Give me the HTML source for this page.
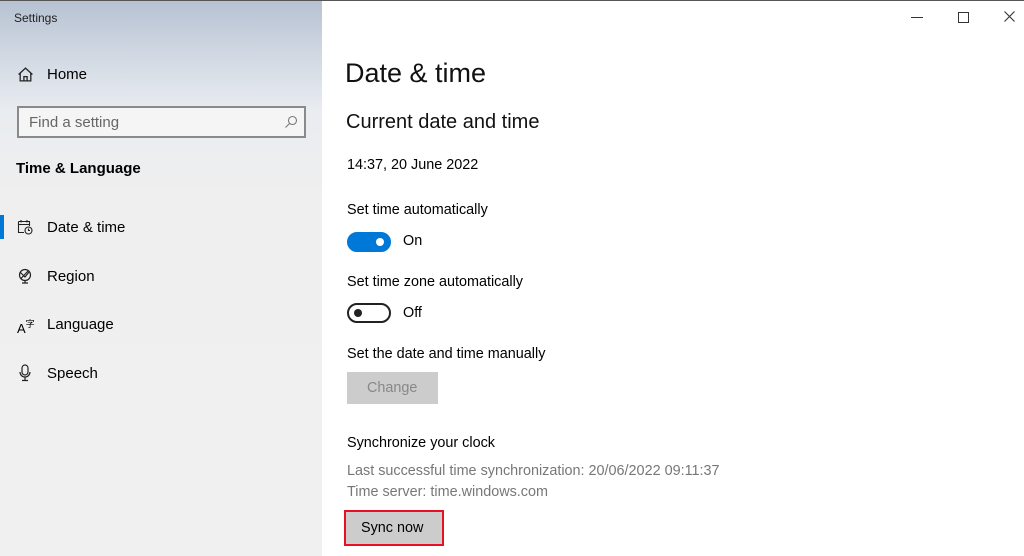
<!DOCTYPE html>
<html><head><style>
body{margin:0;width:1024px;height:556px;overflow:hidden;font-family:"Liberation Sans",sans-serif;background:#fff;position:relative}
.side{position:absolute;left:0;top:0;width:322px;height:556px;background:linear-gradient(180deg,#b6c2d2 0px,#d3dae4 60px,#e9ecf0 110px,#efefef 200px,#f0f0f0 556px)}
.topline{position:absolute;left:0;top:0;width:1024px;height:1px;background:#555}
.t{position:absolute;white-space:nowrap;color:#000}
.m{font-size:14.4px}
.search{position:absolute;left:17px;top:106px;width:285px;height:28px;border:2px solid #8a8a8a;background:#f5f5f5}
.tog{position:absolute;width:40px;height:16px;border-radius:10px;left:347px}
.btn{position:absolute;background:#ccc}
</style></head><body>
<div class="side"></div>
<div class="topline"></div>
<div class="t" style="left:14px;top:11px;font-size:12px;color:#222">Settings</div>
<svg style="position:absolute;left:17px;top:66px" width="17" height="17" viewBox="0 0 16 16" fill="none" stroke="#222" stroke-width="1.2"><path d="M1.5 8L8 2L14.5 8M3 6.5V14H13V6.5M6.5 14V10H9.5V14"/></svg>
<div class="t" style="left:47px;top:66px;font-size:15px">Home</div>
<div class="search"></div>
<div class="t" style="left:29px;top:114px;font-size:15px;color:#666">Find a setting</div>
<svg style="position:absolute;left:284px;top:115px" width="14" height="14" viewBox="0 0 14 14" fill="none" stroke="#777" stroke-width="1.1"><circle cx="8.5" cy="5.5" r="4"/><path d="M5.5 8.5L1.5 12.5"/></svg>
<div class="t" style="left:16px;top:160px;font-size:15px;font-weight:bold">Time &amp; Language</div>
<div style="position:absolute;left:0;top:215px;width:4px;height:24px;background:#0078d7"></div>
<svg style="position:absolute;left:17px;top:219px" width="16" height="16" viewBox="0 0 16 16" fill="none" stroke="#222" stroke-width="1.1"><path d="M1.5 2.5H12.5V7M1.5 2.5V13.5H7M1.5 5.5H12.5M4 1V3.5M10 1V3.5"/><circle cx="11.5" cy="11.5" r="3.5"/><path d="M11.5 9.5V11.5H13"/></svg>
<div class="t" style="left:47px;top:219px;font-size:15px">Date &amp; time</div>
<svg style="position:absolute;left:17px;top:268px" width="16" height="16" viewBox="0 0 16 16" fill="none" stroke="#222" stroke-width="1.2"><circle cx="8" cy="7" r="5.5"/><path d="M3 4L8 9L12 4M4 10.5L11 3M8 12.5V15M5 15H11"/></svg>
<div class="t" style="left:47px;top:268px;font-size:15px">Region</div>
<div class="t" style="left:17px;top:317px;font-size:13px">A<span style="font-size:9px;vertical-align:6px">字</span></div>
<div class="t" style="left:47px;top:316px;font-size:15px">Language</div>
<svg style="position:absolute;left:18px;top:364px" width="14" height="18" viewBox="0 0 14 18" fill="none" stroke="#222" stroke-width="1.2"><rect x="4" y="1" width="6" height="10" rx="3"/><path d="M2 8A5 5 0 0 0 12 8M7 13V16M4 16.5H10"/></svg>
<div class="t" style="left:47px;top:365px;font-size:15px">Speech</div>

<div style="position:absolute;left:911px;top:17px;width:12px;height:1px;background:#333"></div>
<div style="position:absolute;left:958px;top:12px;width:9px;height:9px;border:1px solid #333"></div>
<svg style="position:absolute;left:1004px;top:11px" width="11" height="11" viewBox="0 0 11 11" stroke="#333" stroke-width="1.1"><path d="M0.5 0.5L10.5 10.5M10.5 0.5L0.5 10.5"/></svg>

<div class="t" style="left:345px;top:58px;font-size:27px;color:#111">Date &amp; time</div>
<div class="t" style="left:346px;top:111px;font-size:20px;color:#111">Current date and time</div>
<div class="t m" style="left:347px;top:157px">14:37, 20 June 2022</div>
<div class="t m" style="left:347px;top:202px">Set time automatically</div>
<div class="tog" style="top:232px;background:#0078d7;border:2px solid #0078d7;width:40px"><div style="position:absolute;right:5px;top:4px;width:8px;height:8px;border-radius:50%;background:#fff"></div></div>
<div class="t m" style="left:403px;top:233px">On</div>
<div class="t m" style="left:347px;top:274px">Set time zone automatically</div>
<div class="tog" style="top:303px;border:2px solid #222;width:40px"><div style="position:absolute;left:5px;top:4px;width:8px;height:8px;border-radius:50%;background:#222"></div></div>
<div class="t m" style="left:403px;top:305px">Off</div>
<div class="t m" style="left:347px;top:346px">Set the date and time manually</div>
<div class="btn" style="left:347px;top:372px;width:91px;height:32px"></div>
<div class="t m" style="left:367px;top:380px;color:#888">Change</div>
<div class="t m" style="left:347px;top:435px">Synchronize your clock</div>
<div class="t m" style="left:347px;top:463px;color:#777">Last successful time synchronization: 20/06/2022 09:11:37</div>
<div class="t m" style="left:347px;top:484px;color:#777">Time server: time.windows.com</div>
<div class="btn" style="left:344px;top:510px;width:96px;height:32px;border:2px solid #e81123"></div>
<div class="t m" style="left:361px;top:520px">Sync now</div>
</body></html>
